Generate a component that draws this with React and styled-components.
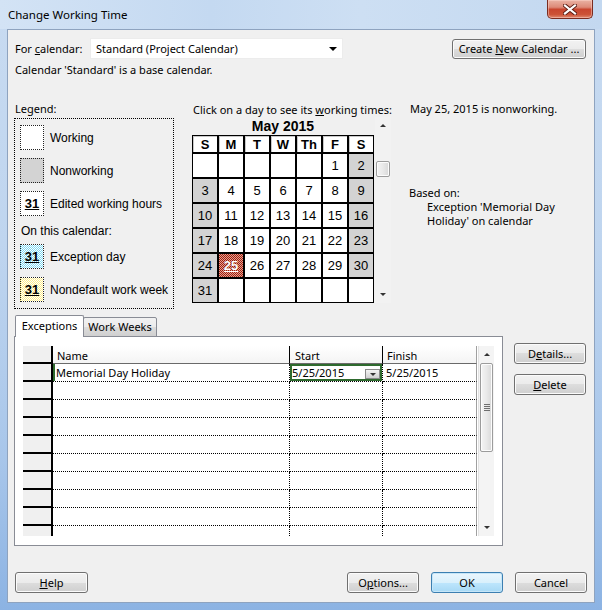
import React from 'react';
import styled, { createGlobalStyle } from 'styled-components';

const UI = `"Noto Sans", "Segoe UI", sans-serif`;
const CAL = `"Liberation Sans", Arial, sans-serif`;

const Global = createGlobalStyle`
  html, body { margin: 0; padding: 0; background: #fff; }
  body { width: 602px; height: 610px; overflow: hidden; }
  * { box-sizing: border-box; }
`;

const Window = styled.div`
  width: 602px;
  height: 610px;
  display: flex;
  flex-direction: column;
  padding: 0 7px 7px 7px;
  background: linear-gradient(180deg, #c8dbf1 0%, #bfd5ef 40%, #a8c6ea 75%, #8cb3e3 100%);
  font-family: ${UI};
  font-size: 11px;
  color: #000;
`;

const TitleBar = styled.div`
  height: 29px;
  margin: 0 -7px;
  padding: 0 9px 0 8px;
  display: flex;
  justify-content: space-between;
  align-items: flex-start;
  background: linear-gradient(90deg, #d3e3f5 0%, #c4d9f1 35%, #cddff3 60%, #c3d8f0 100%);
`;

const TitleText = styled.div`
  margin-top: 7px;
  line-height: 16px;
  font-size: 11.5px;
  color: #000;
`;

const CloseBtn = styled.div`
  width: 46px;
  height: 19px;
  border: 1px solid #7a2c20;
  border-top: none;
  border-radius: 0 0 5px 5px;
  background: linear-gradient(180deg, #eab3a4 0%, #dd8a78 40%, #c9462f 52%, #cc5236 80%, #e08a70 100%);
  box-shadow: inset 0 0 0 1px rgba(255, 220, 210, 0.45);
  display: flex;
  align-items: center;
  justify-content: center;
`;

const Client = styled.div`
  flex: 1;
  border: 1px solid #8ea3bf;
  background: #f0f0f0;
  padding: 8px 8px 8px 6px;
  display: flex;
  flex-direction: column;
`;

const TopRow = styled.div`
  height: 21px;
  display: flex;
  align-items: center;
`;

const FieldLabel = styled.div`
  width: 76px;
  padding-left: 1px;
  white-space: nowrap;
`;

const Select = styled.div`
  width: 253px;
  height: 21px;
  background: #fff;
  border: 1px solid #ececec;
  display: flex;
  align-items: center;
  justify-content: space-between;
  padding: 0 5px 0 5px;
`;

const Caret = styled.span`
  width: 0;
  height: 0;
  border-left: 4px solid transparent;
  border-right: 4px solid transparent;
  border-top: 4px solid #000;
`;

const Spacer = styled.div`
  flex: 1;
`;

const Btn = styled.button`
  width: ${(p) => p.$w}px;
  height: ${(p) => p.$h || 21}px;
  margin-left: ${(p) => p.$ml || 0}px;
  padding: 0;
  border: 1px solid ${(p) => (p.$default ? '#3c7fb1' : '#707070')};
  border-radius: 3px;
  background: ${(p) =>
    p.$default
      ? 'linear-gradient(180deg, #eaf6fd 0%, #d9f0fc 50%, #bee6fd 50%, #a7d9f5 100%)'
      : 'linear-gradient(180deg, #f2f2f2 0%, #ebebeb 50%, #dddddd 50%, #cfcfcf 100%)'};
  box-shadow: inset 0 0 0 1px ${(p) => (p.$default ? '#c6e6f8' : '#fbfbfb')};
  font-family: ${UI};
  font-size: 11px;
  color: #000;
  white-space: nowrap;
  flex-shrink: 0;
`;

const InfoLine = styled.div`
  margin-top: 3px;
  line-height: 16px;
  padding-left: 1px;
`;

const Middle = styled.div`
  margin-top: 23px;
  height: 208px;
  display: flex;
`;

const LegendCol = styled.div`
  width: 161px;
  display: flex;
  flex-direction: column;
`;

const SmallTitle = styled.div`
  line-height: 15px;
  padding-left: 1px;
  padding-top: ${(p) => p.$pt || 0}px;
  white-space: nowrap;
`;

const LegendBox = styled.div`
  margin-top: 2px;
  width: 160px;
  height: 191px;
  border: 1px dotted #000;
  padding: 6px 0 0 5px;
  display: flex;
  flex-direction: column;
  gap: 8px;
  font-family: ${CAL};
  font-size: 12px;
`;

const LegendItem = styled.div`
  height: 25px;
  display: flex;
  align-items: center;
  gap: 6px;
`;

const swatchBg = {
  work: '#fff',
  off: '#d3d3d3',
  edit: '#fff',
  exc: 'repeating-conic-gradient(#7fd8f2 0 25%, #ffffff 0 50%) 0 0 / 2px 2px',
  week: 'repeating-conic-gradient(#ffee8a 0 25%, #ffffff 0 50%) 0 0 / 2px 2px',
};

const Swatch = styled.div`
  width: 24px;
  height: 25px;
  border: 1px dotted #222;
  background: ${(p) => swatchBg[p.$kind]};
  display: flex;
  align-items: center;
  justify-content: center;
  font-weight: bold;
  font-size: 13px;
  text-decoration: underline;
  flex-shrink: 0;
`;

const LegendSub = styled.div`
  height: 12px;
  line-height: 15px;
  padding-left: 1px;
`;

const CalCol = styled.div`
  margin-left: 17px;
  width: 199px;
  display: flex;
  flex-direction: column;
`;

const CalBody = styled.div`
  display: flex;
  gap: 1px;
`;

const CalMain = styled.div`
  width: 182px;
  display: flex;
  flex-direction: column;
`;

const MonthTitle = styled.div`
  height: 18px;
  line-height: 18px;
  text-align: center;
  font-family: ${CAL};
  font-weight: bold;
  font-size: 14px;
`;

const CalGrid = styled.div`
  display: grid;
  grid-template-columns: repeat(7, 24px);
  grid-template-rows: 16px repeat(6, 23px);
  gap: 2px;
  padding: 1px;
  background: #000;
  font-family: ${CAL};
  font-size: 13px;
`;

const WeekHead = styled.div`
  background: #fff;
  font-weight: bold;
  display: flex;
  align-items: center;
  justify-content: center;
  box-shadow: inset 1px 1px 0 #c8c8c8;
`;

const dayBg = {
  work: '#fff',
  empty: '#fff',
  off: '#d3d3d3',
  exc: 'repeating-conic-gradient(#9a2212 0 25%, #eaa090 0 50%) 0 0 / 2px 2px',
};

const Day = styled.div`
  background: ${(p) => dayBg[p.$kind]};
  color: ${(p) => (p.$kind === 'exc' ? '#fff' : '#000')};
  font-weight: ${(p) => (p.$kind === 'exc' ? 'bold' : 'normal')};
  text-decoration: ${(p) => (p.$kind === 'exc' ? 'underline' : 'none')};
  text-shadow: ${(p) => (p.$kind === 'exc' ? '0 0 1px #6a0d00' : 'none')};
  display: flex;
  align-items: center;
  justify-content: center;
`;

const VScroll = styled.div`
  width: ${(p) => p.$w || 16}px;
  height: ${(p) => p.$h}px;
  margin-left: ${(p) => p.$ml || 0}px;
  display: flex;
  flex-direction: column;
  background: ${(p) => p.$bg || '#f3f3f3'};
  border-left: ${(p) => (p.$edge ? '1px solid #e2e2e2' : 'none')};
  flex-shrink: 0;
`;

const ArrowBtn = styled.div`
  height: 17px;
  display: flex;
  align-items: center;
  justify-content: center;
`;

const Tri = styled.span`
  width: 0;
  height: 0;
  border-left: 3px solid transparent;
  border-right: 3px solid transparent;
  ${(p) => (p.$up ? 'border-bottom: 3px solid #333;' : 'border-top: 3px solid #333;')}
`;

const Track = styled.div`
  flex: 1;
  display: flex;
  flex-direction: column;
  padding: 0 1px;
`;

const Thumb = styled.div`
  margin-top: ${(p) => p.$top}px;
  height: ${(p) => p.$h}px;
  border: 1px solid #9c9c9c;
  border-radius: 2px;
  background: linear-gradient(90deg, #f4f4f4 0%, #e9e9e9 50%, #d8d8d8 100%);
  box-shadow: inset 0 0 0 1px #fcfcfc;
  display: flex;
  align-items: center;
  justify-content: center;
`;

const Grip = styled.div`
  width: 6px;
  height: 7px;
  background: repeating-linear-gradient(180deg, #6f6f6f 0 1px, transparent 1px 2px);
`;

const InfoCol = styled.div`
  margin-left: 18px;
  display: flex;
  flex-direction: column;
`;

const BasedOn = styled.div`
  margin-top: 69px;
  line-height: 15px;
`;

const BasedText = styled.div`
  padding-left: 18px;
  line-height: 14px;
`;

const TabSection = styled.div`
  margin-top: 7px;
  display: flex;
`;

const TabsArea = styled.div`
  width: 489px;
  display: flex;
  flex-direction: column;
`;

const TabStrip = styled.div`
  height: 21px;
  display: flex;
  align-items: flex-end;
  padding-left: 1px;
  margin-bottom: -1px;
  position: relative;
  z-index: 1;
`;

const Tab = styled.div`
  width: ${(p) => p.$w}px;
  height: ${(p) => (p.$active ? 22 : 20)}px;
  border: 1px solid #898c95;
  border-bottom: ${(p) => (p.$active ? 'none' : '1px solid #898c95')};
  border-radius: 2px 2px 0 0;
  background: ${(p) =>
    p.$active ? '#fff' : 'linear-gradient(180deg, #f2f2f2 0%, #ebebeb 50%, #dddddd 50%, #cfcfcf 100%)'};
  padding-top: ${(p) => (p.$active ? 2 : 1)}px;
  text-align: center;
  line-height: 16px;
  margin-left: ${(p) => (p.$active ? 0 : -1)}px;
`;

const Panel = styled.div`
  height: 210px;
  border: 1px solid #898c95;
  background: #fff;
  padding: 9px 8px;
  display: flex;
`;

const ExTable = styled.div`
  width: 454px;
  height: 190px;
  overflow: hidden;
  display: grid;
  grid-template-columns: 30px 237px 93px 94px;
  grid-auto-rows: 18px;
  align-content: start;
`;

const Corner = styled.div`
  background: #f0f0f0;
  border-right: 2px solid #000;
  border-bottom: 2px solid #000;
`;

const ColHead = styled.div`
  background: linear-gradient(180deg, #ffffff 0%, #f4f4f4 100%);
  border-bottom: 1px solid #6a6a6a;
  border-right: 1px solid ${(p) => (p.$last ? '#a0a0a0' : '#000')};
  padding: 2px 0 0 ${(p) => p.$pl || 4}px;
  line-height: 15px;
`;

const RowHead = styled.div`
  background: #f0f0f0;
  border-right: 2px solid #000;
  border-bottom: 2px solid #000;
`;

const Cell = styled.div`
  background: #fff;
  border-bottom: 1px dotted #000;
  border-right: 1px ${(p) => (p.$last ? 'solid #a0a0a0' : 'dotted #000')};
  display: flex;
  align-items: center;
  padding-left: ${(p) => p.$pl || 3}px;
  white-space: nowrap;
  box-shadow: ${(p) =>
    p.$edit ? 'inset 0 0 0 2px #2e6a2e' : p.$mark ? 'inset 2px 0 0 #2e6a2e' : 'none'};
`;

const DropBtn = styled.div`
  margin-left: auto;
  margin-right: 2px;
  align-self: flex-end;
  margin-bottom: 2px;
  width: 15px;
  height: 10px;
  border: 1px solid #8a8a8a;
  background: linear-gradient(180deg, #f4f4f4 0%, #e2e2e2 50%, #cfcfcf 100%);
  display: flex;
  align-items: center;
  justify-content: center;
`;

const SideButtons = styled.div`
  margin-left: 11px;
  padding-top: 27px;
  display: flex;
  flex-direction: column;
  gap: 10px;
`;

const BottomRow = styled.div`
  margin-top: 26px;
  height: 21px;
  display: flex;
  padding-left: 1px;
  margin-right: -1px;
`;

const weeks = [
  [null, null, null, null, null, 1, 2],
  [3, 4, 5, 6, 7, 8, 9],
  [10, 11, 12, 13, 14, 15, 16],
  [17, 18, 19, 20, 21, 22, 23],
  [24, 25, 26, 27, 28, 29, 30],
  [31, null, null, null, null, null, null],
];

const dayKind = (d, col) => {
  if (d === null) return 'empty';
  if (d === 25) return 'exc';
  if (col === 0 || col === 6) return 'off';
  return 'work';
};

const CloseIcon = () => (
  <svg width="14" height="11" viewBox="0 0 14 11">
    <path d="M2 1.5 L12 9.5 M12 1.5 L2 9.5" stroke="#5b1c12" strokeWidth="4" strokeLinecap="square" />
    <path d="M2 1.5 L12 9.5 M12 1.5 L2 9.5" stroke="#ffffff" strokeWidth="2.2" strokeLinecap="square" />
  </svg>
);

export default function App() {
  const rows = Array.from({ length: 10 }, (_, i) => i);
  return (
    <>
      <Global />
      <Window>
        <TitleBar>
          <TitleText>Change Working Time</TitleText>
          <CloseBtn>
            <CloseIcon />
          </CloseBtn>
        </TitleBar>
        <Client>
          <TopRow>
            <FieldLabel>
              For <u>c</u>alendar:
            </FieldLabel>
            <Select>
              <span>Standard (Project Calendar)</span>
              <Caret />
            </Select>
            <Spacer />
            <Btn $w={134} $h={20}>
              Create <u>N</u>ew Calendar ...
            </Btn>
          </TopRow>
          <InfoLine>Calendar 'Standard' is a base calendar.</InfoLine>

          <Middle>
            <LegendCol>
              <SmallTitle>Legend:</SmallTitle>
              <LegendBox>
                <LegendItem>
                  <Swatch $kind="work" />
                  Working
                </LegendItem>
                <LegendItem>
                  <Swatch $kind="off" />
                  Nonworking
                </LegendItem>
                <LegendItem>
                  <Swatch $kind="edit">31</Swatch>
                  Edited working hours
                </LegendItem>
                <LegendSub>On this calendar:</LegendSub>
                <LegendItem>
                  <Swatch $kind="exc">31</Swatch>
                  Exception day
                </LegendItem>
                <LegendItem>
                  <Swatch $kind="week">31</Swatch>
                  Nondefault work week
                </LegendItem>
              </LegendBox>
            </LegendCol>

            <CalCol>
              <SmallTitle $pt={1}>
                Click on a day to see its <u>w</u>orking times:
              </SmallTitle>
              <CalBody>
                <CalMain>
                  <MonthTitle>May 2015</MonthTitle>
                  <CalGrid>
                    {['S', 'M', 'T', 'W', 'Th', 'F', 'S'].map((w, i) => (
                      <WeekHead key={'h' + i}>{w}</WeekHead>
                    ))}
                    {weeks.map((wk, r) =>
                      wk.map((d, c) => (
                        <Day key={r + '-' + c} $kind={dayKind(d, c)}>
                          {d}
                        </Day>
                      ))
                    )}
                  </CalGrid>
                </CalMain>
                <VScroll $h={186} $bg="#f2f2f2">
                  <ArrowBtn>
                    <Tri $up />
                  </ArrowBtn>
                  <Track>
                    <Thumb $top={27} $h={16} />
                  </Track>
                  <ArrowBtn>
                    <Tri />
                  </ArrowBtn>
                </VScroll>
              </CalBody>
            </CalCol>

            <InfoCol>
              <SmallTitle>May 25, 2015 is nonworking.</SmallTitle>
              <BasedOn>Based on:</BasedOn>
              <BasedText>
                Exception 'Memorial Day
                <br />
                Holiday' on calendar
              </BasedText>
            </InfoCol>
          </Middle>

          <TabSection>
            <TabsArea>
              <TabStrip>
                <Tab $w={69} $active>
                  Exceptions
                </Tab>
                <Tab $w={74}>Work Weeks</Tab>
              </TabStrip>
              <Panel>
                <ExTable>
                  <Corner />
                  <ColHead>Name</ColHead>
                  <ColHead $pl={5}>Start</ColHead>
                  <ColHead $last>Finish</ColHead>
                  {rows.map((i) => (
                    <React.Fragment key={i}>
                      <RowHead />
                      <Cell $mark={i === 0}>{i === 0 ? 'Memorial Day Holiday' : ''}</Cell>
                      <Cell $edit={i === 0} $pl={2}>
                        {i === 0 ? (
                          <>
                            5/25/2015
                            <DropBtn>
                              <Tri />
                            </DropBtn>
                          </>
                        ) : null}
                      </Cell>
                      <Cell $last>{i === 0 ? '5/25/2015' : ''}</Cell>
                    </React.Fragment>
                  ))}
                </ExTable>
                <VScroll $h={190} $ml={1} $edge $bg="#f4f4f4">
                  <ArrowBtn>
                    <Tri $up />
                  </ArrowBtn>
                  <Track>
                    <Thumb $top={0} $h={89}>
                      <Grip />
                    </Thumb>
                  </Track>
                  <ArrowBtn>
                    <Tri />
                  </ArrowBtn>
                </VScroll>
              </Panel>
            </TabsArea>
            <SideButtons>
              <Btn $w={72}>
                D<u>e</u>tails...
              </Btn>
              <Btn $w={72}>
                <u>D</u>elete
              </Btn>
            </SideButtons>
          </TabSection>

          <BottomRow>
            <Btn $w={73}>
              <u>H</u>elp
            </Btn>
            <Spacer />
            <Btn $w={72}>
              O<u>p</u>tions...
            </Btn>
            <Btn $w={72} $ml={12} $default>
              OK
            </Btn>
            <Btn $w={72} $ml={12}>
              Cancel
            </Btn>
          </BottomRow>
        </Client>
      </Window>
    </>
  );
}
